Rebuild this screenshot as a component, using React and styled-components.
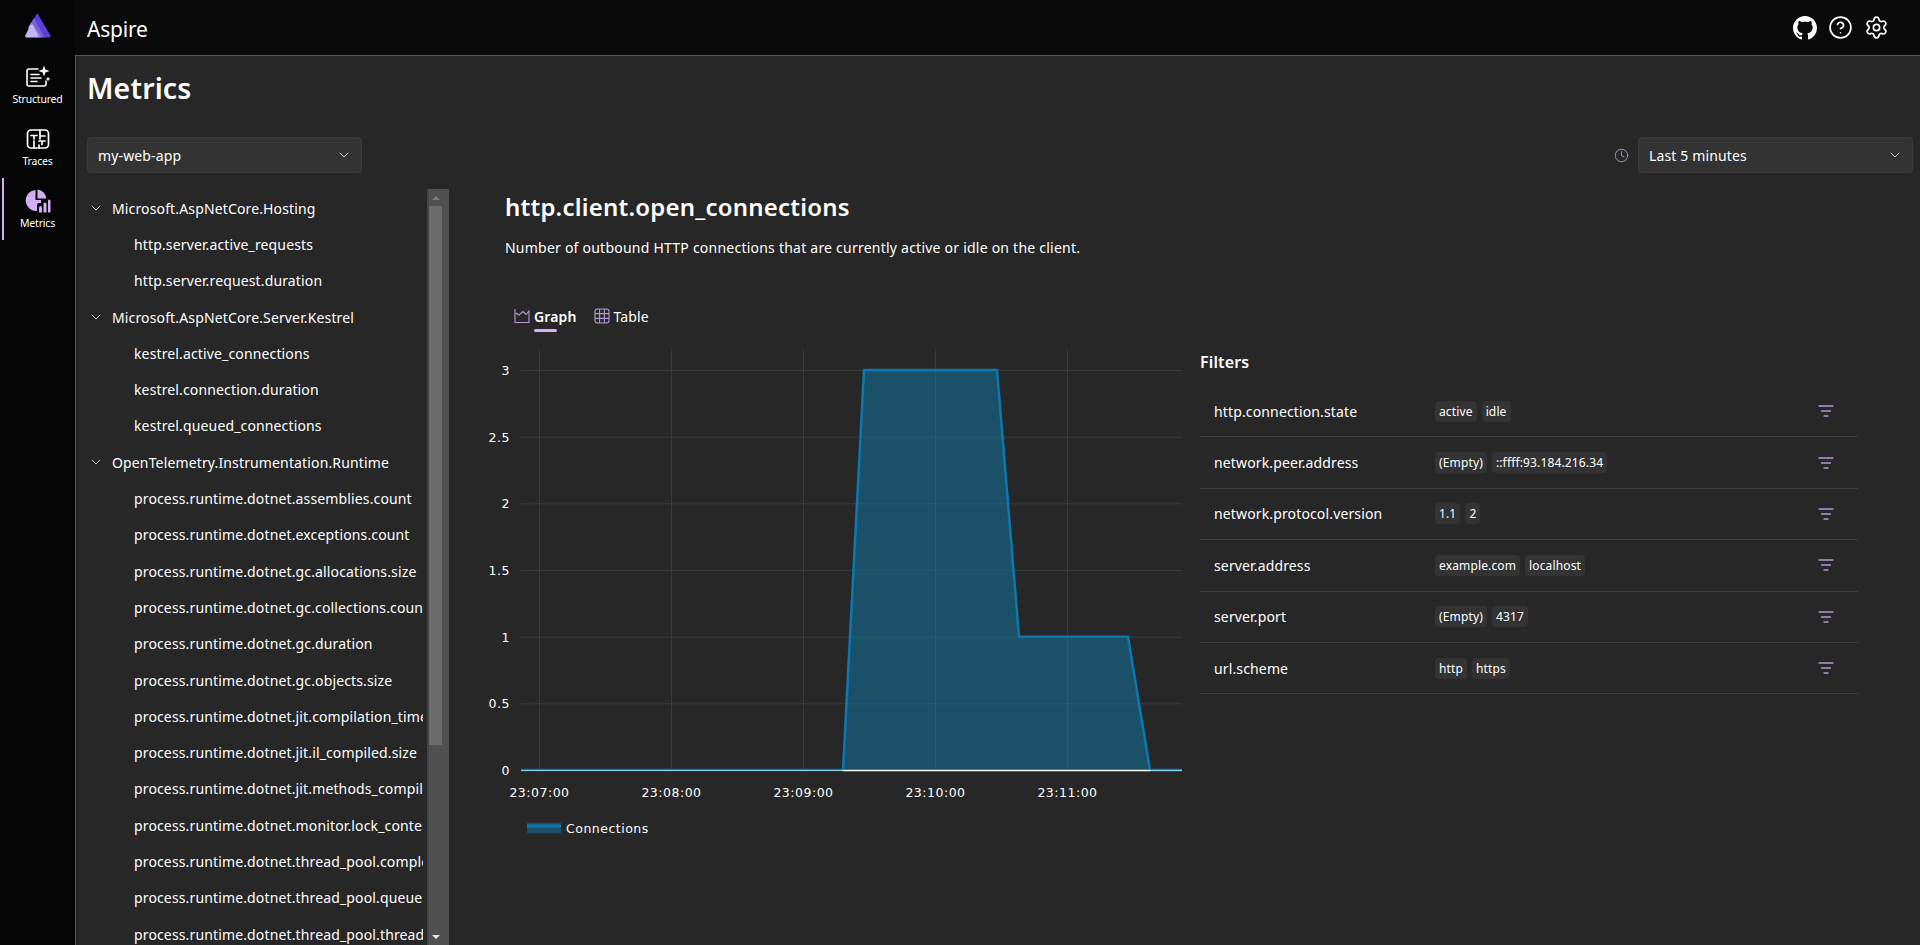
import React from "react";
import styled, { createGlobalStyle } from "styled-components";
import { ChevronDown, CircleHelp, Clock, Settings } from "lucide-react";

const accent = "#d3b0f5";
const muted = "#b39ad3";

const GlobalStyle = createGlobalStyle`
    html, body {
        margin: 0;
        height: 100%;
        overflow: hidden;
        background: #272727;
    }
    * {
        box-sizing: border-box;
    }
    #root {
        height: 945px;
    }
`;

const treeGroups = [
    {
        name: "Microsoft.AspNetCore.Hosting",
        items: ["http.server.active_requests", "http.server.request.duration"],
    },
    {
        name: "Microsoft.AspNetCore.Server.Kestrel",
        items: ["kestrel.active_connections", "kestrel.connection.duration", "kestrel.queued_connections"],
    },
    {
        name: "OpenTelemetry.Instrumentation.Runtime",
        items: [
            "process.runtime.dotnet.assemblies.count",
            "process.runtime.dotnet.exceptions.count",
            "process.runtime.dotnet.gc.allocations.size",
            "process.runtime.dotnet.gc.collections.count",
            "process.runtime.dotnet.gc.duration",
            "process.runtime.dotnet.gc.objects.size",
            "process.runtime.dotnet.jit.compilation_time",
            "process.runtime.dotnet.jit.il_compiled.size",
            "process.runtime.dotnet.jit.methods_compiled",
            "process.runtime.dotnet.monitor.lock_contention",
            "process.runtime.dotnet.thread_pool.completed",
            "process.runtime.dotnet.thread_pool.queue.length",
            "process.runtime.dotnet.thread_pool.threads",
        ],
    },
];

const filters = [
    { name: "http.connection.state", values: ["active", "idle"] },
    { name: "network.peer.address", values: ["(Empty)", "::ffff:93.184.216.34"] },
    { name: "network.protocol.version", values: ["1.1", "2"] },
    { name: "server.address", values: ["example.com", "localhost"] },
    { name: "server.port", values: ["(Empty)", "4317"] },
    { name: "url.scheme", values: ["http", "https"] },
];

const yTicks = [
    { label: "3", y: 370 },
    { label: "2.5", y: 436.7 },
    { label: "2", y: 503.3 },
    { label: "1.5", y: 570 },
    { label: "1", y: 636.7 },
    { label: "0.5", y: 703.3 },
    { label: "0", y: 770 },
];

const xTicks = [
    { label: "23:07:00", x: 539.5 },
    { label: "23:08:00", x: 671.5 },
    { label: "23:09:00", x: 803.5 },
    { label: "23:10:00", x: 935.5 },
    { label: "23:11:00", x: 1067.5 },
];

// svg origin is 480,343 in page coordinates
const px = x => x - 480;
const py = y => y - 343;

const AreaChart = () => {
    const line = [[521, 770], [843, 770], [864, 370], [997, 370], [1019, 636.7], [1128, 636.7], [1150, 770], [1182, 770]]
        .map(p => `${px(p[0])},${py(p[1])}`)
        .join(" ");

    return (
        <ChartSvg viewBox="0 0 715 510">
            {xTicks.map(t => (
                <line key={t.x} x1={px(t.x)} x2={px(t.x)} y1={6} y2={py(770)} stroke="#3a3a3a" />
            ))}
            {yTicks.map(t => (
                <line key={t.y} x1={px(521)} x2={px(1182)} y1={py(t.y) + 0.5} y2={py(t.y) + 0.5} stroke="#3a3a3a" />
            ))}
            <polygon points={line} fill="rgba(12, 130, 183, 0.45)" />
            <polyline points={line} fill="none" stroke="#0b78b0" strokeWidth="2.5" />
            <line x1={px(843)} x2={px(1150)} y1={py(770) + 0.5} y2={py(770) + 0.5} stroke="#ffffff" strokeWidth="1.5" />
            <line x1={px(521)} x2={px(843)} y1={py(770) + 0.5} y2={py(770) + 0.5} stroke="#8ad0f2" strokeWidth="1.2" />
            <line x1={px(1150)} x2={px(1182)} y1={py(770) + 0.5} y2={py(770) + 0.5} stroke="#8ad0f2" strokeWidth="1.2" />
            {yTicks.map(t => (
                <AxisLabel key={t.label} x={px(510)} y={py(t.y) + 5} textAnchor="end">{t.label}</AxisLabel>
            ))}
            {xTicks.map(t => (
                <AxisLabel key={t.label} x={px(t.x)} y={py(796.5)} textAnchor="middle">{t.label}</AxisLabel>
            ))}
            <rect x={px(527)} y={py(823)} width="34" height="10" fill="rgba(12, 130, 183, 0.45)" />
            <line x1={px(527)} x2={px(561)} y1={py(826)} y2={py(826)} stroke="#0b78b0" strokeWidth="3" />
            <AxisLabel x={px(566)} y={py(832.5)}>Connections</AxisLabel>
        </ChartSvg>
    );
};

const AspireLogo = () => (
    <svg width="28" height="26" viewBox="0 0 28 26">
        <path d="M14 1.5 L26.5 22.5 Q27 24.5 25 24.5 L20 24.5 L8 9 L12 2 Q13 0.5 14 1.5 Z" fill="#5b3fd6" />
        <path d="M10 5 L20.5 24.5 L14 24.5 L5 13 Z" fill="#7a62dd" />
        <path d="M7.5 9.5 L17.5 24.5 L12 24.5 L4 14.5 Z" fill="#9584e6" />
        <path d="M6.5 12 Q8 11 9.5 13 L13.5 21.5 Q14.5 24.5 12 24.5 L2.5 24.5 Q0.5 24.5 1.5 22 Z" fill="#c3b6f2" />
    </svg>
);

const StructuredIcon = () => (
    <svg width="26" height="24" viewBox="0 0 26 24" fill="none" stroke="#fff" strokeWidth="1.6" strokeLinecap="round">
        <path d="M13 4 H4 Q2 4 2 6 V19 Q2 21 4 21 H19 Q21 21 21 19 V16" />
        <path d="M6 9.5 H14 M6 13 H16 M6 16.5 H12" />
        <path d="M19 0.5 L20.4 4.6 L24.5 6 L20.4 7.4 L19 11.5 L17.6 7.4 L13.5 6 L17.6 4.6 Z" fill="#fff" stroke="none" />
        <path d="M23 11.5 L23.7 13.3 L25.5 14 L23.7 14.7 L23 16.5 L22.3 14.7 L20.5 14 L22.3 13.3 Z" fill="#fff" stroke="none" />
    </svg>
);

const TracesIcon = () => (
    <svg width="24" height="24" viewBox="0 0 24 24" fill="none" stroke="#fff" strokeWidth="1.7" strokeLinecap="round">
        <rect x="1.5" y="3" width="21" height="18" rx="3.5" />
        <path d="M5 8.5 H11 M8 8.5 V12 M14 3 V12 M14 9 H19 M13 14 H19 M16 14 V17.5 M8 14 V21 M13 18 V21" />
    </svg>
);

const MetricsIcon = () => (
    <svg width="26" height="24" viewBox="0 0 26 24" fill={accent}>
        <path d="M10.5 1 A10.5 10.5 0 1 0 12 22 L12 16 Q12 14 14 14 H16 V12 Q16 11 17 11 H10.5 Z" />
        <path d="M12.5 0.5 A10 10 0 0 1 21.5 9.5 H12.5 Z" />
        <path d="M14 19 Q14 17 15.5 17 Q17 17 17 19 V23.5 H14 Z" />
        <path d="M18.5 15 Q18.5 13.5 20 13.5 Q21.5 13.5 21.5 15 V23.5 H18.5 Z" />
        <path d="M23 12 Q23 10.5 24 10.5 Q25.5 10.5 25.5 12 V23.5 H23 Z" />
    </svg>
);

const GithubIcon = () => (
    <svg width="24" height="24" viewBox="0 0 16 16" fill="#fff">
        <path d="M8 0C3.58 0 0 3.58 0 8c0 3.54 2.29 6.53 5.47 7.59.4.07.55-.17.55-.38 0-.19-.01-.82-.01-1.49-2.01.37-2.53-.49-2.69-.94-.09-.23-.48-.94-.82-1.13-.28-.15-.68-.52-.01-.53.63-.01 1.08.58 1.23.82.72 1.21 1.87.87 2.33.66.07-.52.28-.87.51-1.07-1.78-.2-3.64-.89-3.64-3.95 0-.87.31-1.59.82-2.15-.08-.2-.36-1.02.08-2.12 0 0 .67-.21 2.2.82.64-.18 1.32-.27 2-.27s1.36.09 2 .27c1.53-1.04 2.2-.82 2.2-.82.44 1.1.16 1.92.08 2.12.51.56.82 1.27.82 2.15 0 3.07-1.87 3.75-3.65 3.95.29.25.54.73.54 1.48 0 1.07-.01 1.93-.01 2.2 0 .21.15.46.55.38A8.01 8.01 0 0 0 16 8c0-4.42-3.58-8-8-8z" />
    </svg>
);

const GraphIcon = () => (
    <svg width="16" height="16" viewBox="0 0 16 16" fill="none" stroke={muted} strokeWidth="1.1">
        <path d="M1 1 V14.5 H15.5" />
        <path d="M1.5 5 L5 7 L9 3.5 L12 6.5 L15 3 V14.5" />
    </svg>
);

const TableIcon = () => (
    <svg width="16" height="16" viewBox="0 0 16 16" fill="none" stroke={muted} strokeWidth="1.1">
        <rect x="1" y="1" width="14" height="14" rx="2.5" />
        <path d="M5.6 1 V15 M10.4 1 V15 M1 5.6 H15 M1 10.4 H15" />
    </svg>
);

const FilterIcon = () => (
    <svg width="16" height="12" viewBox="0 0 16 12" stroke={muted} strokeWidth="1.3" strokeLinecap="round">
        <path d="M1 1 H15 M3.5 6 H12.5 M6 11 H10" />
    </svg>
);

const SidebarItem = ({ icon, label, active }) => (
    <NavItem $active={active}>
        {icon}
        <NavLabel>{label}</NavLabel>
    </NavItem>
);

const App = () => {
    return (
        <Page>
            <GlobalStyle />
            <Rail>
                <LogoBox><AspireLogo /></LogoBox>
                <SidebarItem icon={<StructuredIcon />} label="Structured" />
                <SidebarItem icon={<TracesIcon />} label="Traces" />
                <SidebarItem icon={<MetricsIcon />} label="Metrics" active />
            </Rail>
            <Main>
                <TopBar>
                    <Brand>Aspire</Brand>
                    <TopIcons>
                        <GithubIcon />
                        <CircleHelp size={25} strokeWidth={1.6} color="#fff" />
                        <Settings size={25} strokeWidth={1.6} color="#fff" />
                    </TopIcons>
                </TopBar>
                <Panel>
                    <PageTitle>Metrics</PageTitle>
                    <Toolbar>
                        <Select>
                            my-web-app
                            <ChevronDown size={16} strokeWidth={1.3} color="#e6e6e6" />
                        </Select>
                        <TimeFilter>
                            <Clock size={15} strokeWidth={1.4} color={muted} />
                            <Select>
                                Last 5 minutes
                                <ChevronDown size={16} strokeWidth={1.3} color="#e6e6e6" />
                            </Select>
                        </TimeFilter>
                    </Toolbar>
                    <Body>
                        <TreeColumn>
                            <Tree>
                                {treeGroups.map(group => (
                                    <React.Fragment key={group.name}>
                                        <TreeGroup>
                                            <ChevronDown size={16} strokeWidth={1.3} color="#e6e6e6" />
                                            {group.name}
                                        </TreeGroup>
                                        {group.items.map(item => (
                                            <TreeLeaf key={item}>{item}</TreeLeaf>
                                        ))}
                                    </React.Fragment>
                                ))}
                            </Tree>
                            <ScrollTrack>
                                <ScrollArrow />
                                <ScrollThumb />
                                <ScrollArrow $down />
                            </ScrollTrack>
                        </TreeColumn>
                        <Detail>
                            <MetricName>http.client.open_connections</MetricName>
                            <MetricDescription>Number of outbound HTTP connections that are currently active or idle on the client.</MetricDescription>
                            <Tabs>
                                <Tab $active>
                                    <GraphIcon />
                                    <TabLabel $active>Graph</TabLabel>
                                </Tab>
                                <Tab>
                                    <TableIcon />
                                    <TabLabel>Table</TabLabel>
                                </Tab>
                            </Tabs>
                            <ChartRow>
                                <AreaChart />
                                <FiltersBox>
                                    <FiltersTitle>Filters</FiltersTitle>
                                    {filters.map(f => (
                                        <FilterRow key={f.name}>
                                            <FilterName>{f.name}</FilterName>
                                            <Chips>
                                                {f.values.map(v => <Chip key={v}>{v}</Chip>)}
                                            </Chips>
                                            <FilterIcon />
                                        </FilterRow>
                                    ))}
                                </FiltersBox>
                            </ChartRow>
                        </Detail>
                    </Body>
                </Panel>
            </Main>
        </Page>
    );
};

const Page = styled.div`
    display: flex;
    height: 945px;
    overflow: hidden;
    color: #fff;
    font-family: "Noto Sans", "Open Sans", sans-serif;
    font-size: 14px;
    letter-spacing: 0.14px;
`;

const Rail = styled.nav`
    width: 75px;
    flex: none;
    background: #050505;
`;

const LogoBox = styled.div`
    height: 54px;
    display: flex;
    align-items: center;
    justify-content: center;
    padding-bottom: 2px;
`;

const NavItem = styled.div`
    position: relative;
    height: 62px;
    display: flex;
    flex-direction: column;
    align-items: center;
    justify-content: center;
    gap: 4px;
    &::before {
        content: "";
        display: ${props => (props.$active ? "block" : "none")};
        position: absolute;
        left: 2px;
        top: 0;
        bottom: 0;
        width: 2px;
        background: ${accent};
    }
`;

const NavLabel = styled.span`
    font-size: 10.5px;
    line-height: 13px;
    letter-spacing: -0.2px;
`;

const Main = styled.div`
    flex: 1;
    min-width: 0;
    display: flex;
    flex-direction: column;
`;

const TopBar = styled.header`
    height: 55px;
    flex: none;
    display: flex;
    align-items: center;
    justify-content: space-between;
    padding: 0 31px 0 12px;
    background: #0a0a0a;
`;

const Brand = styled.div`
    font-size: 21px;
    letter-spacing: -0.2px;
    padding-top: 3px;
`;

const TopIcons = styled.div`
    display: flex;
    align-items: center;
    gap: 11px;
`;

const Panel = styled.main`
    flex: 1;
    min-height: 0;
    display: flex;
    flex-direction: column;
    background: #272727;
    border-top: 1px solid #555;
    border-left: 1px solid #555;
    padding-left: 11px;
`;

const PageTitle = styled.h1`
    margin: 0;
    height: 81px;
    padding-top: 12px;
    font-size: 28.5px;
    line-height: 40px;
    font-weight: 600;
`;

const Toolbar = styled.div`
    flex: none;
    display: flex;
    justify-content: space-between;
    padding-right: 7px;
`;

const Select = styled.div`
    width: 275px;
    height: 36px;
    display: flex;
    align-items: center;
    justify-content: space-between;
    padding: 0 9px 0 10px;
    background: #333;
    border: 1px solid #3b3b3b;
    border-radius: 4px;
`;

const TimeFilter = styled.div`
    display: flex;
    align-items: center;
    gap: 9px;
`;

const Body = styled.div`
    flex: 1;
    min-height: 0;
    display: flex;
    margin-top: 16px;
`;

const TreeColumn = styled.div`
    width: 362px;
    flex: none;
    display: flex;
    align-items: stretch;
`;

const Tree = styled.div`
    width: 336px;
    flex: none;
    padding-top: 1px;
    overflow: hidden;
`;

const TreeGroup = styled.div`
    height: 36.3px;
    display: flex;
    align-items: center;
    gap: 8px;
    padding-left: 1px;
    white-space: nowrap;
`;

const TreeLeaf = styled.div`
    height: 36.3px;
    display: flex;
    align-items: center;
    padding-left: 47px;
    white-space: nowrap;
`;

const ScrollTrack = styled.div`
    width: 22px;
    margin-left: 4px;
    display: flex;
    flex-direction: column;
    align-items: flex-start;
    background: #505050;
    border-left: 2px solid #454545;
`;

const ScrollArrow = styled.div`
    flex: none;
    width: 13px;
    height: 17px;
    display: flex;
    align-items: center;
    justify-content: center;
    &::after {
        content: "";
        border-left: 4px solid transparent;
        border-right: 4px solid transparent;
        ${props => (props.$down ? "border-top: 4px solid #e8e8e8;" : "border-bottom: 4px solid #7d7d7d;")}
    }
`;

const ScrollThumb = styled.div`
    width: 13px;
    height: 539px;
    flex: none;
    background: #6b6b6b;
    margin-bottom: auto;
`;

const Detail = styled.section`
    flex: 1;
    min-width: 0;
    padding: 0 62px 0 31px;
`;

const MetricName = styled.h2`
    margin: 0 0 0 25px;
    font-size: 24px;
    line-height: 36px;
    font-weight: 600;
    letter-spacing: 0.2px;
`;

const MetricDescription = styled.p`
    margin: 13px 0 0 25px;
    line-height: 20px;
    letter-spacing: 0.23px;
`;

const Tabs = styled.div`
    display: flex;
    gap: 17px;
    margin: 46px 0 0 34px;
`;

const Tab = styled.div`
    display: flex;
    align-items: center;
    gap: 4px;
    height: 24px;
`;

const TabLabel = styled.span`
    position: relative;
    font-weight: ${props => (props.$active ? 600 : 400)};
    &::after {
        content: "";
        display: ${props => (props.$active ? "block" : "none")};
        position: absolute;
        left: 0;
        right: 20px;
        bottom: -6px;
        height: 3px;
        border-radius: 2px;
        background: ${accent};
    }
`;

const ChartRow = styled.div`
    display: flex;
    margin-top: 15px;
`;

const ChartSvg = styled.svg`
    width: 715px;
    height: 510px;
    flex: none;
`;

const AxisLabel = styled.text`
    font-family: "DejaVu Sans", sans-serif;
    font-size: 12.5px;
    letter-spacing: 0.5px;
    fill: #fff;
`;

const FiltersBox = styled.div`
    flex: 1;
    margin-left: 5px;
`;

const FiltersTitle = styled.div`
    height: 43px;
    padding-top: 8px;
    font-size: 16px;
    line-height: 22px;
    font-weight: 600;
`;

const FilterRow = styled.div`
    height: 51.4px;
    display: flex;
    align-items: center;
    padding: 0 24px 0 14px;
    border-bottom: 1px solid #3d3d3d;
`;

const FilterName = styled.div`
    width: 221px;
    flex: none;
`;

const Chips = styled.div`
    flex: 1;
    display: flex;
    gap: 5px;
`;

const Chip = styled.span`
    height: 21px;
    display: flex;
    align-items: center;
    padding: 0 4px;
    font-size: 12px;
    border-radius: 4px;
    background: #333;
`;

export default App;
